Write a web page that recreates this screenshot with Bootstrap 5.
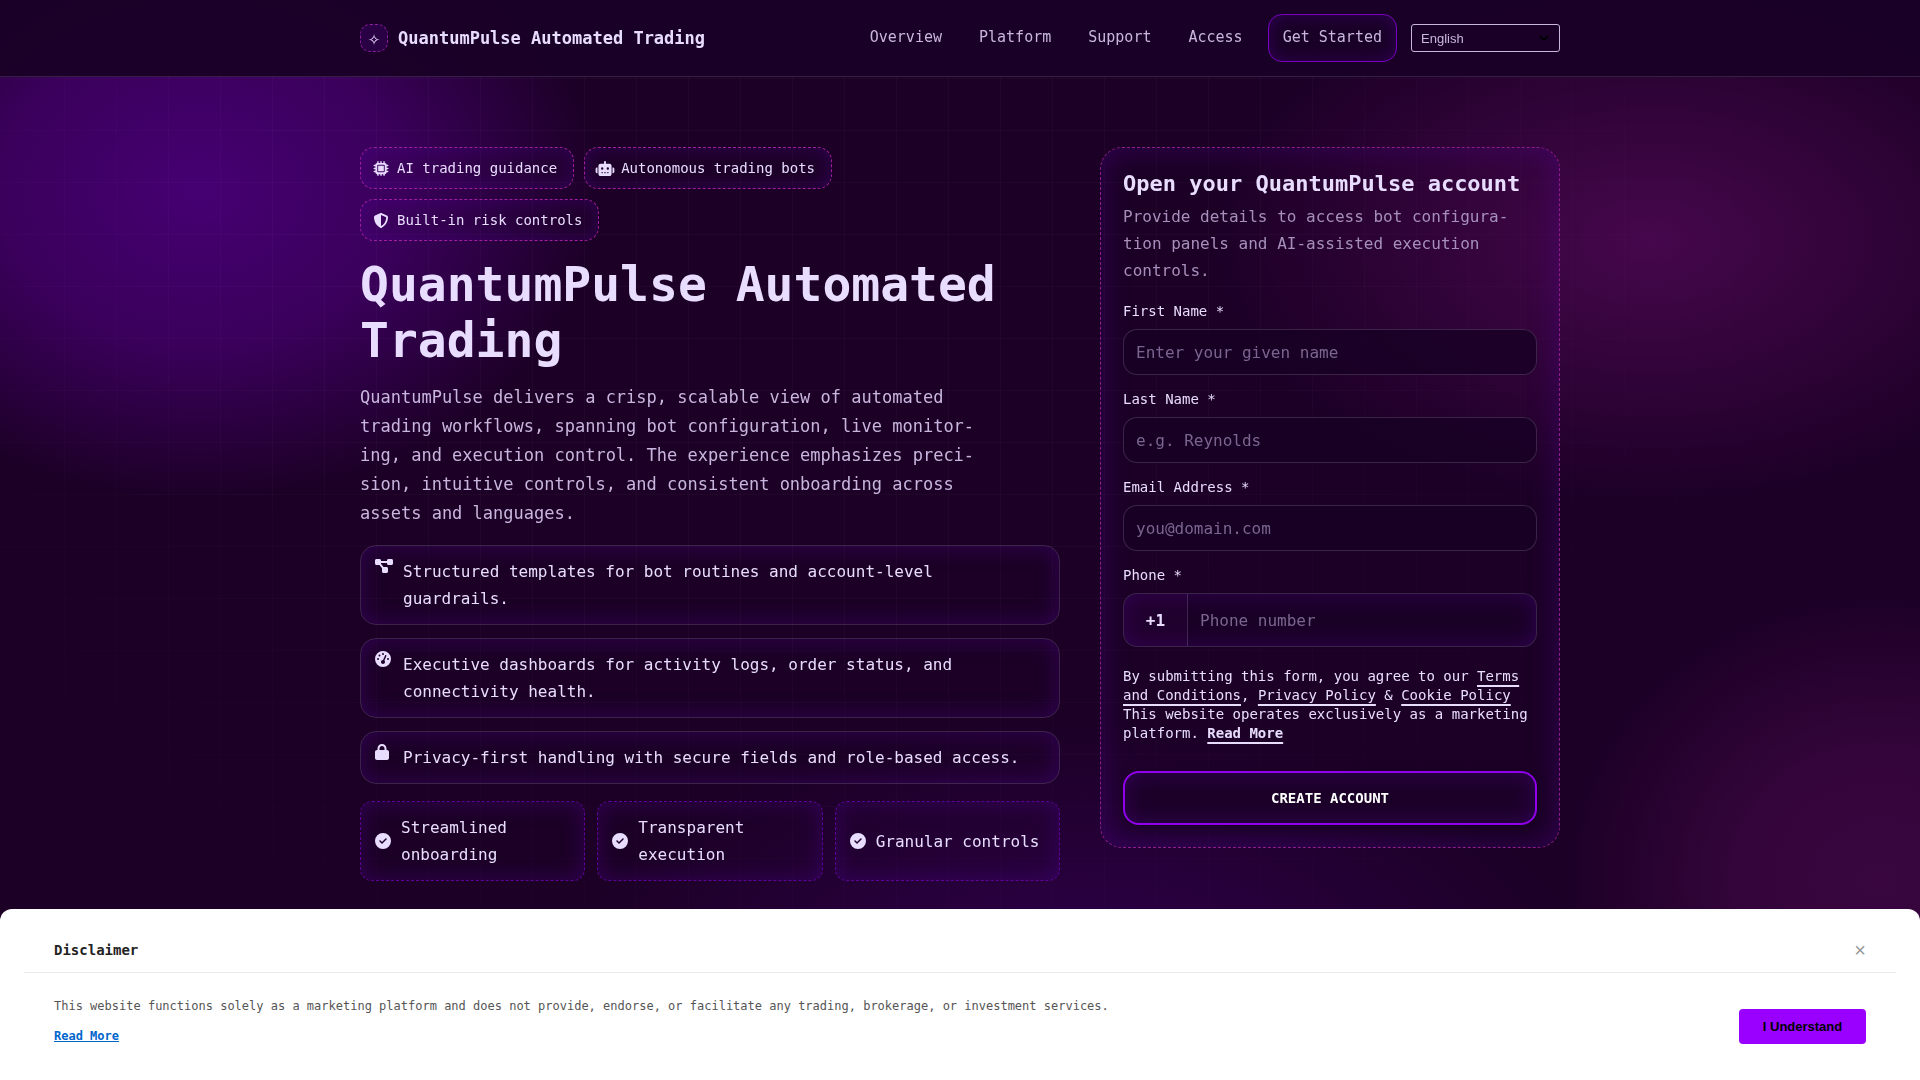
<!DOCTYPE html>
<html lang="en">
<head>
<meta charset="utf-8">
<meta name="viewport" content="width=device-width, initial-scale=1">
<title>QuantumPulse Automated Trading</title>
<link href="https://cdn.jsdelivr.net/npm/bootstrap@5.3.0/dist/css/bootstrap.min.css" rel="stylesheet">
<style>
:root{--ink:#e9ddff;--soft:#c8b6de;--dim:#a690bb;--line:rgba(233,221,255,.16);--glow:rgba(88,0,170,.34)}
body{font-family:"DejaVu Sans Mono","Liberation Mono",monospace;font-size:16px;line-height:27px;color:var(--ink);min-height:100vh;
 background:
 radial-gradient(ellipse 400px 310px at 200px 190px,#450072 0,rgba(69,0,110,.74) 50%,transparent 100%),
 radial-gradient(ellipse 440px 265px at 1650px 240px,#46074c 0,transparent 100%),
 radial-gradient(ellipse 320px 290px at 1880px 880px,#39063f 0,rgba(57,6,63,.8) 45%,transparent 100%),
 radial-gradient(ellipse 520px 280px at 1080px 1000px,#2f004c 0,transparent 100%),
 #1c0026;background-attachment:fixed}
body::before{content:"";position:fixed;inset:0;z-index:-1;background:
 repeating-linear-gradient(90deg,transparent 0 51px,rgba(233,221,255,.026) 51px 52px) 13px 0,
 repeating-linear-gradient(0deg,transparent 0 51px,rgba(233,221,255,.026) 51px 52px) 0 38px;
 -webkit-mask-image:radial-gradient(ellipse 60% 90% at 40% 20%,#000 40%,transparent 100%);mask-image:radial-gradient(ellipse 60% 90% at 40% 20%,#000 40%,transparent 100%)}
.shell{max-width:1240px;padding:0 20px;margin:0 auto;width:100%}
.topbar{background:rgba(26,0,38,.94);border-bottom:1px solid rgba(233,221,255,.14)}
.topbar .shell{min-height:76px}
.brand-link{gap:10px}
.brand-name{font-size:17px;font-weight:700;color:var(--ink)}
.brand-mark{width:28px;height:28px;border:1px dashed #8c1fa0;border-radius:10px;background:#2a0044;color:var(--ink);font-size:20px;font-weight:700;line-height:26px}
.top-links{gap:13px}
.top-link{font-size:15px;line-height:26px;color:var(--soft);text-decoration:none;padding:10px 12px 12px}
.top-cta{padding:9px 14px 11px;border:1px solid #7a00c4;border-radius:14px;box-shadow:inset 0 0 18px var(--glow)}
.top-tools{gap:14px}
.lang{appearance:none;width:149px;height:28px;border:1px solid var(--soft);border-radius:3px;color:var(--soft);font:13px "Liberation Sans",sans-serif;padding:0 24px 0 9px;
 background:url("data:image/svg+xml,%3Csvg xmlns='http://www.w3.org/2000/svg' viewBox='0 0 10 6'%3E%3Cpath d='M1 1l4 4 4-4' fill='none' stroke='%23000' stroke-width='1.8'/%3E%3C/svg%3E") right 10px center/10px 6px no-repeat}
.split{display:grid;grid-template-columns:35fr 23fr;gap:40px;padding-top:70px;align-items:start}
.pills{gap:10px}
.pill{border:1px dashed #a01ca0;border-radius:14px;padding:8px 16px 8px 12px;font-size:14px;line-height:24px;box-shadow:inset 0 0 20px var(--glow)}
.ico{fill:currentColor;flex:none;display:block;overflow:visible}
.pill .ico{width:16px;height:15px}
h1{font-size:48px;line-height:56px;font-weight:700;margin:15px 0;color:var(--ink)}
.intro{font-size:17px;line-height:29px;max-width:620px;color:var(--soft);margin:0 0 17px}
.features{gap:13px}
.feature{border:1px solid var(--line);border-radius:16px;padding:12px 14px;gap:10px;box-shadow:inset 0 0 22px var(--glow)}
.feature .ico{width:18px;height:16px}
.perks{gap:12px;margin-top:17px}
.perk{flex:1 1 0;border:1px dashed #5f009c;border-radius:12px;padding:12px 14px;gap:10px;box-shadow:inset 0 0 22px var(--glow)}
.perk .ico{width:16px;height:16px}
.signup{border:1px dashed #901a90;border-radius:22px;padding:22px;box-shadow:inset 0 0 30px var(--glow)}
.signup h2{font-size:22px;line-height:27px;font-weight:700;margin:0 0 6px}
.signup .hint{color:var(--dim);margin:0 0 15px}
.signup label{display:block;font-size:14px;line-height:24px;margin-bottom:6px;color:var(--ink)}
.field{width:100%;height:46px;border:1px solid var(--line);border-radius:14px;background:rgba(24,0,36,.8);color:var(--ink);padding:0 12px;margin-bottom:12px;display:block}
.field::placeholder,.tel-input::placeholder{color:#79658f;opacity:1}
.tel-box{height:54px;border:1px solid var(--line);border-radius:14px;overflow:hidden;background:#1a0026;box-shadow:inset 0 0 22px var(--glow)}
.tel-code{width:64px;font-weight:700;border-right:1px solid var(--line);background:rgba(60,0,80,.2)}
.tel-input{background:transparent;border:0;color:var(--ink);padding:0 12px;min-width:0}
.terms{font-size:14px;line-height:19px;margin:20px 0 28px}
.terms a{color:var(--ink);text-decoration:underline;text-decoration-thickness:2px;text-underline-offset:4px;text-decoration-skip-ink:none}
.submit{width:100%;height:54px;border:2px solid #9000ec;border-radius:16px;background:#1c0028;color:#fff;font-size:14px;font-weight:700;box-shadow:inset 0 0 22px var(--glow),0 4px 12px rgba(20,0,30,.6)}
.notice{background:#fff;border-radius:12px 12px 0 0;padding:24px 24px 0;min-height:171px}
.notice-head{padding:0 30px 4px;border-bottom:1px solid #eaeaea;font-size:14px;font-weight:700;color:#222;line-height:35px}
.notice-close{border:0;background:none;padding:0;color:#999;font:20px "Liberation Sans",sans-serif;line-height:35px}
.notice-body{padding:24px 30px;font-size:12px;line-height:18px;color:#555}
.notice-body p{margin:0 0 12px}
.notice-body a{color:#06c;font-weight:700}
.accept{border:0;border-radius:4px;background:#90f;color:#000;width:127px;height:35px;font:bold 13px "Liberation Sans",sans-serif;margin-top:12px;flex:none}
@media (max-width:1199px){.split{grid-template-columns:1fr}.topbar .shell,.top-tools{flex-wrap:wrap}}
</style>
<script src="https://cdn.jsdelivr.net/npm/bootstrap@5.3.0/dist/js/bootstrap.bundle.min.js"></script>
</head>
<body>
<header class="topbar sticky-top">
 <div class="shell d-flex align-items-center justify-content-between">
  <a href="#" class="brand-link d-flex align-items-center text-decoration-none">
   <span class="brand-mark text-center">✧</span><span class="brand-name">QuantumPulse Automated Trading</span>
  </a>
  <nav class="top-tools d-flex align-items-center">
   <div class="top-links d-flex align-items-center">
    <a class="top-link" href="#overview">Overview</a><a class="top-link" href="#platform">Platform</a><a class="top-link" href="#support">Support</a><a class="top-link" href="#access">Access</a><a class="top-link top-cta" href="#signup">Get Started</a>
   </div>
   <select class="lang" aria-label="Language"><option>English</option></select>
  </nav>
 </div>
</header>
<main class="shell split">
 <section id="overview">
  <div class="pills d-flex flex-wrap">
   <span class="pill d-flex align-items-center gap-2"><svg class="ico" viewBox="0 0 512 512"><path fill-rule="evenodd" d="M176 24c0-13.3-10.7-24-24-24s-24 10.7-24 24V64c-35.3 0-64 28.7-64 64H24c-13.3 0-24 10.7-24 24s10.7 24 24 24H64v56H24c-13.3 0-24 10.7-24 24s10.7 24 24 24H64v56H24c-13.3 0-24 10.7-24 24s10.7 24 24 24H64c0 35.3 28.7 64 64 64v40c0 13.3 10.7 24 24 24s24-10.7 24-24V448h56v40c0 13.3 10.7 24 24 24s24-10.7 24-24V448h56v40c0 13.3 10.7 24 24 24s24-10.7 24-24V448c35.3 0 64-28.7 64-64h40c13.3 0 24-10.7 24-24s-10.7-24-24-24H448V280h40c13.3 0 24-10.7 24-24s-10.7-24-24-24H448V176h40c13.3 0 24-10.7 24-24s-10.7-24-24-24H448c0-35.3-28.7-64-64-64V24c0-13.3-10.7-24-24-24s-24 10.7-24 24V64H280V24c0-13.3-10.7-24-24-24s-24 10.7-24 24V64H176V24zM160 128H352c17.7 0 32 14.3 32 32V352c0 17.7-14.3 32-32 32H160c-17.7 0-32-14.3-32-32V160c0-17.7 14.3-32 32-32zM352 160H160V352H352V160z"/></svg>AI trading guidance</span>
   <span class="pill d-flex align-items-center gap-2"><svg class="ico" viewBox="64 0 512 512"><path fill-rule="evenodd" d="M320 0c17.700 0 32 14.300 32 32V96H472c39.800 0 72 32.200 72 72V440c0 39.800-32.200 72-72 72H168c-39.800 0-72-32.200-72-72V168c0-39.800 32.200-72 72-72H288V32c0-17.700 14.300-32 32-32zM208 384a16 16 0 0 0 0 32h32a16 16 0 0 0 0-32zM304 384a16 16 0 0 0 0 32h32a16 16 0 0 0 0-32zM400 384a16 16 0 0 0 0 32h32a16 16 0 0 0 0-32zM264 256a40 40 0 1 0-80 0 40 40 0 1 0 80 0zM416 296a40 40 0 1 0 0-80 40 40 0 1 0 0 80zM48 224H64V416H48c-26.500 0-48-21.500-48-48V272c0-26.500 21.500-48 48-48zM592 224c26.500 0 48 21.500 48 48v96c0 26.500-21.500 48-48 48H576V224z"/></svg>Autonomous trading bots</span>
   <span class="pill d-flex align-items-center gap-2"><svg class="ico" viewBox="0 0 512 512"><path fill-rule="evenodd" d="M256 0c4.600 0 9.200 1 13.400 2.900L457.700 82.800c22 9.300 38.400 31 38.300 57.200c-.5 99.200-41.300 280.700-213.600 363.200c-16.700 8-36.100 8-52.800 0C57.300 420.700 16.500 239.200 16 140c-.1-26.200 16.300-47.900 38.300-57.200L242.700 2.900C246.800 1 251.400 0 256 0zM256 66.800V444.800C394 378 431.100 230.100 432 141.400L256 66.800z"/></svg>Built-in risk controls</span>
  </div>
  <h1>QuantumPulse Automated Trading</h1>
  <p class="intro">QuantumPulse delivers a crisp, scalable view of automated trading workflows, spanning bot configuration, live monitor&shy;ing, and execution control. The experience emphasizes preci&shy;sion, intuitive controls, and consistent onboarding across assets and languages.</p>
  <div class="features d-flex flex-column">
   <div class="feature d-flex align-items-start"><svg class="ico" viewBox="0 0 576 512"><path d="M0 80C0 53.500 21.500 32 48 32h96c26.500 0 48 21.500 48 48V96H384V80c0-26.500 21.500-48 48-48h96c26.500 0 48 21.500 48 48v96c0 26.500-21.500 48-48 48H432c-26.500 0-48-21.500-48-48V160H192v16c0 1.700-.1 3.400-.3 5L272 288h96c26.500 0 48 21.500 48 48v96c0 26.500-21.500 48-48 48H272c-26.500 0-48-21.500-48-48V336c0-1.700 .1-3.400 .3-5L144 224H48c-26.500 0-48-21.500-48-48V80z"/></svg><span>Structured templates for bot routines and account-level guardrails.</span></div>
   <div class="feature d-flex align-items-start"><svg class="ico" viewBox="0 0 512 512" preserveAspectRatio="xMinYMid"><path fill-rule="evenodd" d="M0 256a256 256 0 1 1 512 0A256 256 0 1 1 0 256zM288 96a32 32 0 1 0-64 0 32 32 0 1 0 64 0zM256 416c35.300 0 64-28.700 64-64c0-17.400-6.900-33.100-18.100-44.600L366 161.700c5.300-12.100-.2-26.300-12.300-31.600s-26.300 .2-31.600 12.300L257.900 288h-1.900c-35.300 0-64 28.700-64 64s28.700 64 64 64zM176 144a32 32 0 1 0-64 0 32 32 0 1 0 64 0zM96 288a32 32 0 1 0 0-64 32 32 0 1 0 0 64zM448 256a32 32 0 1 0-64 0 32 32 0 1 0 64 0z"/></svg><span>Executive dashboards for activity logs, order status, and connectivity health.</span></div>
   <div class="feature d-flex align-items-start"><svg class="ico" viewBox="0 0 448 512" preserveAspectRatio="xMinYMid"><path fill-rule="evenodd" d="M144 144v48H304V144c0-44.200-35.800-80-80-80s-80 35.800-80 80zM80 192V144C80 64.500 144.500 0 224 0s144 64.500 144 144v48h16c35.300 0 64 28.700 64 64V448c0 35.300-28.700 64-64 64H64c-35.300 0-64-28.700-64-64V256c0-35.300 28.700-64 64-64H80z"/></svg><span>Privacy-first handling with secure fields and role-based access.</span></div>
  </div>
  <div class="perks d-flex">
   <div class="perk d-flex align-items-center"><svg class="ico" viewBox="0 0 512 512"><path id="tick" fill-rule="evenodd" d="M256 512A256 256 0 1 0 256 0a256 256 0 1 0 0 512zM369 209L241 337c-9.400 9.400-24.600 9.400-33.900 0l-64-64c-9.400-9.400-9.400-24.600 0-33.900s24.600-9.400 33.900 0l47 47L335 175c9.400-9.400 24.600-9.400 33.900 0s9.400 24.600 0 33.900z"/></svg><span>Streamlined onboarding</span></div>
   <div class="perk d-flex align-items-center"><svg class="ico" viewBox="0 0 512 512"><use href="#tick"/></svg><span>Transparent execution</span></div>
   <div class="perk d-flex align-items-center"><svg class="ico" viewBox="0 0 512 512"><use href="#tick"/></svg><span>Granular controls</span></div>
  </div>
 </section>
 <form class="signup" id="signup">
  <h2>Open your QuantumPulse account</h2>
  <p class="hint">Provide details to access bot configura&shy;tion panels and AI-assisted execution controls.</p>
  <label for="first">First Name *</label><input class="field" id="first" type="text" placeholder="Enter your given name">
  <label for="last">Last Name *</label><input class="field" id="last" type="text" placeholder="e.g. Reynolds">
  <label for="email">Email Address *</label><input class="field" id="email" type="email" placeholder="you@domain.com">
  <label for="phone">Phone *</label>
  <div class="tel-box d-flex"><span class="tel-code d-flex align-items-center justify-content-center">+1</span><input class="tel-input flex-grow-1" id="phone" type="tel" placeholder="Phone number"></div>
  <p class="terms">By submitting this form, you agree to our <a href="#">Terms and Conditions</a>, <a href="#">Privacy Policy</a> &amp; <a href="#">Cookie Policy</a><br>This website operates exclusively as a marketing platform. <a class="fw-bold" href="#">Read More</a></p>
  <button class="submit" type="button">CREATE ACCOUNT</button>
 </form>
</main>
<aside class="notice fixed-bottom" aria-label="Disclaimer">
 <div class="notice-head d-flex justify-content-between"><span>Disclaimer</span><button class="notice-close" type="button" aria-label="Close">×</button></div>
 <div class="notice-body d-flex justify-content-between align-items-start">
  <div><p>This website functions solely as a marketing platform and does not provide, endorse, or facilitate any trading, brokerage, or investment services.</p><a href="#">Read More</a></div>
  <button class="accept" type="button">I Understand</button>
 </div>
</aside>
</body>
</html>
